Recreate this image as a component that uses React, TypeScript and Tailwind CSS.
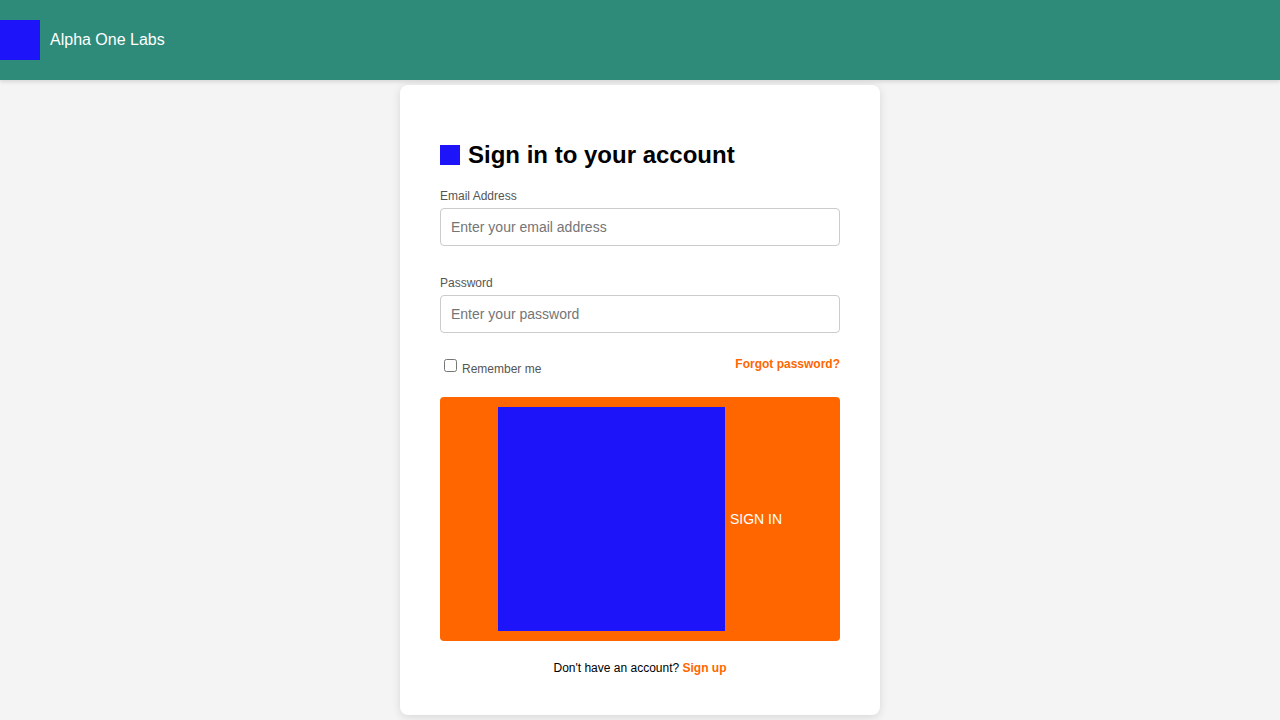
export default function App() {
  return (
    <div
      className="min-h-screen bg-[#f4f4f4]"
      style={{ fontFamily: '"Liberation Sans", Arial, sans-serif' }}
    >
      <header className="flex h-[80px] items-center bg-[#2e8b7a] shadow-[0_2px_4px_rgba(0,0,0,0.12)]">
        <div className="h-[40px] w-[40px] bg-[#1e14fa]" />
        <span className="ml-[10px] text-[16px] text-white">Alpha One Labs</span>
      </header>

      <main className="flex justify-center pt-[5px]">
        <div className="w-[480px] rounded-lg bg-white px-[40px] pb-[40px] pt-[55px] shadow-[0_2px_8px_rgba(0,0,0,0.12)]">
          <div className="flex h-[30px] items-center gap-[8px]">
            <div className="h-[20px] w-[20px] bg-[#1e14fa]" />
            <h1 className="text-[24px] font-bold leading-[30px] text-black">Sign in to your account</h1>
          </div>

          <form className="mt-[19px]" onSubmit={(e) => e.preventDefault()}>
            <label className="block text-[12px] leading-[14px] text-[#555]">Email Address</label>
            <input
              type="email"
              placeholder="Enter your email address"
              className="mt-[5px] block h-[38px] w-full rounded-[4px] border border-[#ccc] px-[10px] text-[14px] text-[#333] outline-none placeholder:text-[#757575]"
            />

            <label className="mt-[30px] block text-[12px] leading-[14px] text-[#555]">Password</label>
            <input
              type="password"
              placeholder="Enter your password"
              className="mt-[5px] block h-[38px] w-full rounded-[4px] border border-[#ccc] px-[10px] text-[14px] text-[#333] outline-none placeholder:text-[#757575]"
            />

            <div className="mt-[22px] flex items-start justify-between">
              <label className="flex items-start pl-[4px] pt-[4px] text-[12px] text-[#555]">
                <input type="checkbox" className="h-[13px] w-[13px]" />
                <span className="ml-[5px] mt-[3px] leading-[14px]">Remember me</span>
              </label>
              <a href="#" className="pt-[2px] text-[12px] font-bold leading-[14px] text-[#ff6600]">
                Forgot password?
              </a>
            </div>

            <button
              type="submit"
              className="mt-[21px] flex h-[244px] w-full items-center justify-center gap-[5px] rounded-[4px] bg-[#ff6600] text-[14px] text-white"
            >
              <span className="block h-[224px] w-[227px] bg-[#1e14fa]" />
              <span>SIGN IN</span>
            </button>
          </form>

          <p className="mt-[20px] text-center text-[12px] leading-[14px] text-black">
            Don't have an account?{" "}
            <a href="#" className="font-bold text-[#ff6600]">
              Sign up
            </a>
          </p>
        </div>
      </main>
    </div>
  );
}
